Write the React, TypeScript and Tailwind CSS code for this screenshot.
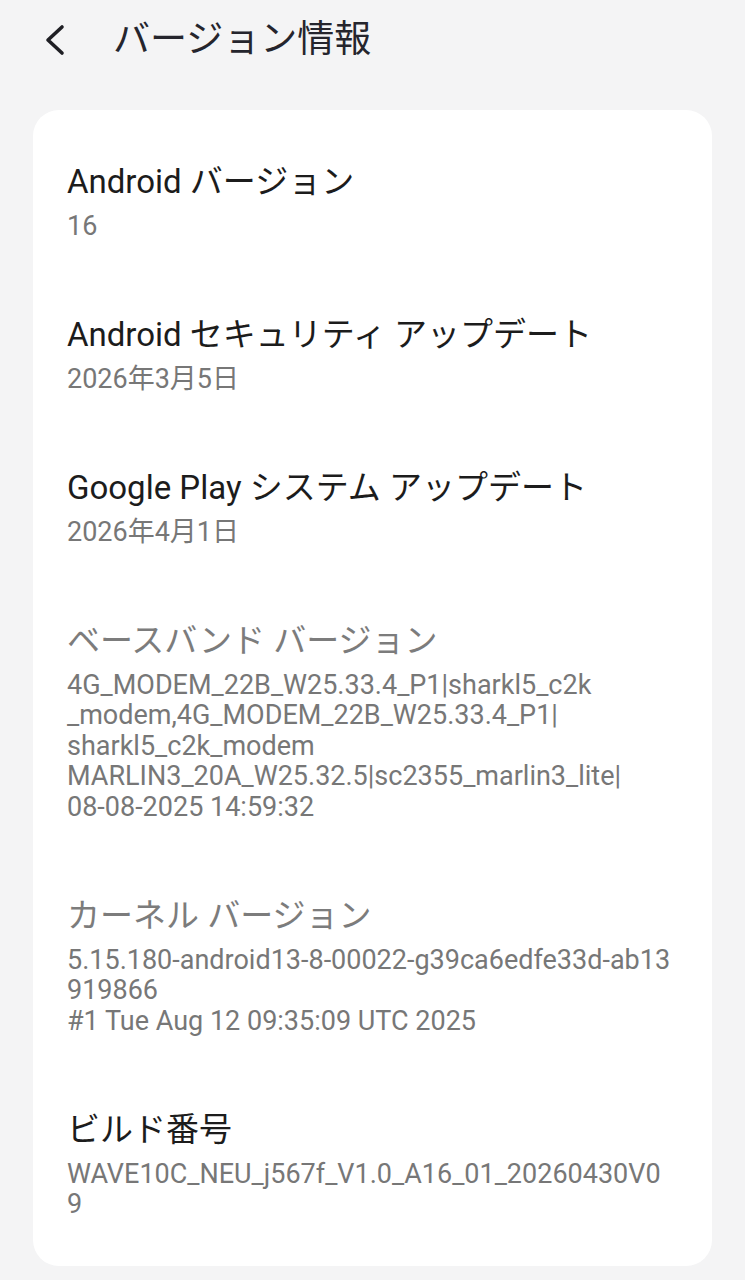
const items: { title: string; lines: string[]; disabled?: boolean }[] = [
  { title: 'Android バージョン', lines: ['16'] },
  { title: 'Android セキュリティ アップデート', lines: ['2026年3月5日'] },
  { title: 'Google Play システム アップデート', lines: ['2026年4月1日'] },
  {
    title: 'ベースバンド バージョン',
    disabled: true,
    lines: [
      '4G_MODEM_22B_W25.33.4_P1|sharkl5_c2k',
      '_modem,4G_MODEM_22B_W25.33.4_P1|',
      'sharkl5_c2k_modem',
      'MARLIN3_20A_W25.32.5|sc2355_marlin3_lite|',
      '08-08-2025 14:59:32',
    ],
  },
  {
    title: 'カーネル バージョン',
    disabled: true,
    lines: [
      '5.15.180-android13-8-00022-g39ca6edfe33d-ab13',
      '919866',
      '#1 Tue Aug 12 09:35:09 UTC 2025',
    ],
  },
  { title: 'ビルド番号', lines: ['WAVE10C_NEU_j567f_V1.0_A16_01_20260430V0', '9'] },
];

export default function App() {
  return (
    <div
      className="min-h-[1280px] bg-[#f4f4f5] pb-4"
      style={{ fontFamily: 'Roboto, "Noto Sans CJK JP", sans-serif' }}
    >
      {/* top bar */}
      <div className="flex h-[80px] items-center">
        <button className="ml-[40px] flex h-[30px] w-[30px] items-center justify-center text-[#1f1f24]">
          <svg width="22" height="32" viewBox="0 0 22 32" fill="none">
            <path d="M18 3 L4 16 L18 29" stroke="currentColor" strokeWidth="3.6" strokeLinecap="round" strokeLinejoin="round" />
          </svg>
        </button>
        <h1 className="ml-[43px] text-[37px] leading-[44px] font-normal text-[#25252d]">バージョン情報</h1>
      </div>

      {/* info card */}
      <div className="mx-[33px] mt-[30px] rounded-[26px] bg-white px-[34px] pt-[15px] pb-[9px]">
        {items.map((item) => (
          <div key={item.title} className="py-[36.75px]">
            <div className={`text-[33px] leading-[40px] ${item.disabled ? 'text-[#7c7c7c]' : 'text-[#1c1c1c]'}`}>
              {item.title}
            </div>
            <div className="mt-[9px] text-[27px] leading-[30.5px] text-[#777777]">
              {item.lines.map((l) => (
                <div key={l} className="whitespace-nowrap">{l}</div>
              ))}
            </div>
          </div>
        ))}
      </div>
    </div>
  );
}
